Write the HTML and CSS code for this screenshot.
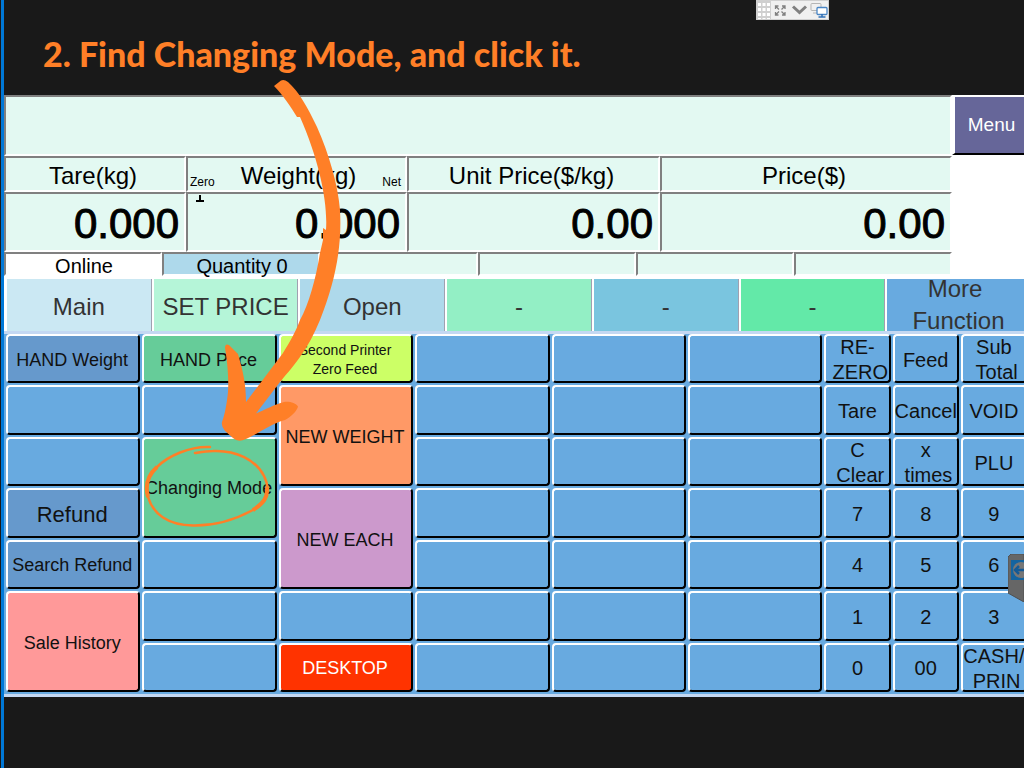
FILE: index.html
```
<!DOCTYPE html>
<html lang="en">
<head>
<meta charset="UTF-8">
<meta name="viewport" content="width=device-width, initial-scale=1.0">
<title>Scale - Changing Mode</title>
<link rel="stylesheet" href="styles.css">
</head>
<body>

<div class="page">
    <header class="top">
        <h1>2. Find Changing Mode, and click it.</h1>
        <div class="remote-bar">
            <svg width="73" height="20" viewBox="0 0 73 20">
                <rect width="73" height="20" fill="#f0f0f0"/>
                <rect width="15" height="20" fill="#cfcfcf"/>
                <path d="M0 .5H73M0 19.5H73M72.5 0V20" stroke="#d0d0d0"/>
                <path d="M3.500 3V19M8 3V19M12.500 3V19" stroke="#fff" stroke-width="3" stroke-dasharray="3 2"/>
                <path d="M19.500 9V6h3M26 6h3v3M29 12v3h-3M22.500 15h-3v-3M20 6.500l3 3M28.500 6.500l-3 3M28.500 14.500l-3-3M20 14.500l3-3" fill="none" stroke="#808080" stroke-width="1.300"/>
                <path d="M37 6.500l6.500 6L50 6.500" fill="none" stroke="#808080" stroke-width="3"/>
                <rect x="55" y="3.500" width="10" height="7" rx="1" fill="#f0f0f0" stroke="#b5b5b5"/>
                <path d="M57 13h4" stroke="#b5b5b5"/>
                <rect x="61" y="7.500" width="10" height="7" rx="1" fill="#fff" stroke="#4a86c5" stroke-width="1.300"/>
                <path d="M66 14v3M62.500 17h7" stroke="#2f6fb5" stroke-width="1.500"/>
            </svg>
        </div>
    </header>

    <main class="scale">
        <section class="display">
            <div class="readout">
                <div class="cell message"></div>
                <div class="cells labels">
                    <div class="cell">Tare(kg)</div>
                    <div class="cell weight"><small>Zero</small><span>Weight(kg)</span><small>Net</small></div>
                    <div class="cell">Unit Price($/kg)</div>
                    <div class="cell">Price($)</div>
                </div>
                <div class="cells values">
                    <div class="cell">0.000</div>
                    <div class="cell"><svg class="zero-mark" width="8" height="7" viewBox="0 0 8 7"><path d="M4 0V6M0 6H8" stroke="#000" stroke-width="2"/></svg>0.000</div>
                    <div class="cell">0.00</div>
                    <div class="cell">0.00</div>
                </div>
                <div class="status">
                    <div class="cell online">Online</div>
                    <div class="cell quantity">Quantity 0</div>
                    <div class="cell"></div>
                    <div class="cell"></div>
                    <div class="cell"></div>
                    <div class="cell"></div>
                </div>
            </div>
            <button class="menu">Menu</button>
        </section>

        <nav class="tabs">
            <button class="tab-main">Main</button>
            <button class="tab-set">SET PRICE</button>
            <button class="tab-open">Open</button>
            <button class="tab-mint">-</button>
            <button class="tab-sky">-</button>
            <button class="tab-green">-</button>
            <button class="tab-more"><span>More<br>&nbsp;Function</span></button>
        </nav>

        <section class="keys">
            <button class="key steel">HAND Weight</button>
            <button class="key green">HAND Price</button>
            <button class="key lime"><span>Second Printer<br>Zero Feed</span></button>
            <button class="key"></button>
            <button class="key"></button>
            <button class="key"></button>
            <button class="key pad"><span>RE-<br>&nbsp;ZERO</span></button>
            <button class="key pad">Feed</button>
            <button class="key pad"><span>Sub<br>&nbsp;Total</span></button>

            <button class="key"></button>
            <button class="key"></button>
            <button class="key orange tall">NEW WEIGHT</button>
            <button class="key"></button>
            <button class="key"></button>
            <button class="key"></button>
            <button class="key pad">Tare</button>
            <button class="key pad">Cancel</button>
            <button class="key pad">VOID</button>

            <button class="key"></button>
            <button class="key green tall">Changing Mode</button>
            <button class="key"></button>
            <button class="key"></button>
            <button class="key"></button>
            <button class="key pad"><span>C<br>&nbsp;Clear</span></button>
            <button class="key pad"><span>x<br>&nbsp;times</span></button>
            <button class="key pad">PLU</button>

            <button class="key steel large">Refund</button>
            <button class="key purple tall">NEW EACH</button>
            <button class="key"></button>
            <button class="key"></button>
            <button class="key"></button>
            <button class="key pad">7</button>
            <button class="key pad">8</button>
            <button class="key pad">9</button>

            <button class="key steel">Search Refund</button>
            <button class="key"></button>
            <button class="key"></button>
            <button class="key"></button>
            <button class="key"></button>
            <button class="key pad">4</button>
            <button class="key pad">5</button>
            <button class="key pad">6</button>

            <button class="key pink tall">Sale History</button>
            <button class="key"></button>
            <button class="key"></button>
            <button class="key"></button>
            <button class="key"></button>
            <button class="key"></button>
            <button class="key pad">1</button>
            <button class="key pad">2</button>
            <button class="key pad">3</button>

            <button class="key"></button>
            <button class="key red">DESKTOP</button>
            <button class="key"></button>
            <button class="key"></button>
            <button class="key"></button>
            <button class="key pad">0</button>
            <button class="key pad">00</button>
            <button class="key pad"><span>CASH/<br>&nbsp;PRIN</span></button>
        </section>
    </main>

    <!-- hand drawn arrow and circle -->
    <svg class="arrow" width="400" height="540" viewBox="0 0 400 540">
        <path fill="#ff7f27" d="M274 86L281 80.500Q284 79 288 82C299 92 307 106 317 127C329 154 338 185 340 210C342 245 336 280 320 320C314 334 308 346 300 357C292 368 285 376 280 382L256 413.500C265 410 275 404 284 402C289 401 296 403 298 406.500C297 411 291 417 285 420C270 424 260 433 246 439Q238 443 233 438L225 431Q221 426 222 422C225 414 227 402 228 392C229 376 227 360 225 348Q225 343 229 345L238 354C243 371 246 384 246 402L283 353C291 340 296 331 300 320C309 304 316 278 320 253L323 240L323 228L326 230C328 202 319 160 300 117L297 117C291 107 283 95 274 86Z"/>
        <path fill="none" stroke="#ff7f27" stroke-width="2.500" stroke-linecap="round" d="M210 447C190 446 168 456 157 467C147 476 145 486 148 497C153 514 168 525 193 525.500C218 526 240 517 253 510C269 500 270 488 264 476C256 460 236 450 213 451C206 451 201 452 195 453"/>
        <path fill="none" stroke="#ff7f27" stroke-width="4" d="M157 467C147 476 145 486 148 497M253 510C264 503 268 497 267 487"/>
    </svg>

    <svg class="side-tab" width="16" height="48" viewBox="0 0 16 48">
        <path d="M0 3L3 0H16V48L0 39Z" fill="#666" stroke="#505050"/>
        <rect x="3" y="6" width="20" height="20" fill="#1464a0"/>
        <circle cx="13" cy="16" r="8" fill="#777"/>
        <path d="M7 16H16M11 12L7 16L11 20" fill="none" stroke="#145a96" stroke-width="2.500"/>
    </svg>
</div>

</body>
</html>
```
FILE: styles.css
```
* {
    box-sizing: border-box;
}
body {
    margin: 0;
    background-color: #191919;
    font-family: "Liberation Sans", Arial, sans-serif;
    color: #000;
}
button {
    font-family: inherit;
    margin: 0;
    padding: 0;
    cursor: pointer;
}
.page {
    position: relative;
    min-height: 100vh;
    margin-left: 1px;
    border-left: 3px solid #0078d7;
    overflow: hidden;
}
.top {
    height: 95px;
    padding: 34px 0 0 39px;
}
.top h1 {
    margin: 0;
    font-family: Lato, "Open Sans", sans-serif;
    font-size: 34px;
    font-weight: 900;
    line-height: 40px;
    color: #ff7f27;
}
.remote-bar {
    position: absolute;
    top: 0;
    right: 195px;
}
.remote-bar svg {
    display: block;
}
.scale {
    background-color: #fff;
}

/* weight display */
.display {
    display: flex;
}
.readout {
    flex: 1;
}
.cell {
    min-width: 0;
    background-color: #e3f9f2;
    border: 2px solid;
    border-color: #808080 #fff #fff #808080;
    display: flex;
    align-items: center;
    justify-content: center;
}
.message {
    height: 61px;
}
.cells {
    display: grid;
    grid-template-columns: 182fr 221fr 253fr 292fr;
}
.labels {
    height: 36px;
    font-size: 24px;
}
.labels .cell {
    padding: 3px 4px 0 0;
}
.labels .weight {
    justify-content: space-between;
    padding-left: 2px;
}
.labels small {
    font-size: 12px;
    padding-top: 12px;
}
.values {
    height: 60px;
    font-size: 42px;
    -webkit-text-stroke: 1px #000;
}
.values .cell {
    position: relative;
    justify-content: flex-end;
    padding: 4px 5px 0 0;
}
.zero-mark {
    position: absolute;
    top: 1px;
    left: 8px;
}
.status {
    display: grid;
    grid-template-columns: repeat(6, 1fr);
    height: 24px;
    font-size: 20px;
    line-height: 16px;
}
.status .cell {
    padding: 4px 0 0 2px;
}
.status .online {
    background-color: #fff;
}
.status .quantity {
    background-color: #aed9eb;
}
.menu {
    width: 72px;
    height: 60px;
    padding-left: 4px;
    border: 2px solid;
    border-color: #fff transparent #000 #fff;
    border-right: 0;
    border-left-width: 3px;
    background-color: #666699;
    color: #fff;
    font-size: 19px;
}

/* page tabs */
.tabs {
    display: grid;
    grid-template-columns: repeat(7, minmax(0, 1fr));
    grid-template-rows: minmax(0, 1fr);
    margin: 3px -8px 0 1px;
    height: 52px;
}
.tabs button {
    display: flex;
    align-items: center;
    justify-content: center;
    border: 0;
    border-right: 1px solid #a0a0b0;
    border-left: 2px solid #fff;
    padding-top: 4px;
    font-size: 24px;
    line-height: 32px;
    white-space: nowrap;
    color: #333;
}
.tabs .tab-main {
    background-color: #cbe8f3;
}
.tabs .tab-set {
    background-color: #b5f5d8;
}
.tabs .tab-open {
    background-color: #aed9eb;
}
.tabs .tab-mint {
    background-color: #93efc5;
}
.tabs .tab-sky {
    background-color: #7ac5df;
}
.tabs .tab-green {
    background-color: #63e9a8;
}
.tabs .tab-more {
    padding: 0 8px 0 0;
    background-color: #68aae0;
}

/* key grid */
.keys {
    display: grid;
    grid-template-columns: repeat(6, minmax(0, 2fr)) repeat(3, minmax(0, 1fr));
    grid-template-rows: repeat(7, minmax(0, 1fr));
    height: 366px;
    margin-right: -4px;
    padding-left: 1px;
    border-top: 3px solid #c4d8f2;
    border-bottom: 3px solid #c4d8f2;
    background-color: #68aae0;
}
.key {
    display: flex;
    align-items: center;
    justify-content: center;
    margin: 0 1px 2px;
    border: 2px solid;
    border-color: #fff #000 #000 #fff;
    border-radius: 4px;
    padding: 3px 2px 0 0;
    background-color: #68aae0;
    font-size: 18px;
    line-height: 25px;
    white-space: nowrap;
    color: #111;
}
.tall {
    grid-row: span 2;
}
.steel {
    background-color: #6699cc;
}
.green {
    background-color: #66cc99;
}
.lime {
    background-color: #ccff66;
    font-size: 14px;
    line-height: 19px;
}
.orange {
    background-color: #ff9966;
}
.purple {
    background-color: #cc99cc;
}
.pink {
    background-color: #ff9999;
}
.red {
    background-color: #ff3300;
    color: #fff;
}
.large {
    font-size: 22px;
}
.pad {
    padding-right: 0;
    font-size: 20px;
}

/* drawn over the screen */
.arrow {
    position: absolute;
    top: 0;
    left: -4px;
    pointer-events: none;
}
.side-tab {
    position: absolute;
    top: 554px;
    right: 0;
}
```
